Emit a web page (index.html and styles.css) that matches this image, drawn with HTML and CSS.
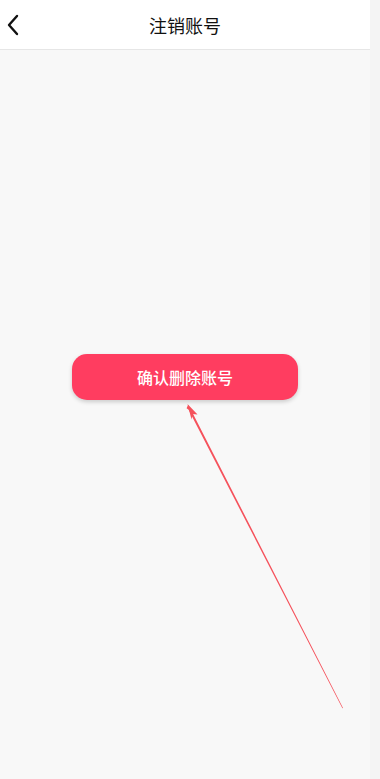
FILE: index.html
```html
<!DOCTYPE html>
<html lang="zh">
<head>
<meta charset="utf-8">
<link rel="stylesheet" href="styles.css">
</head>
<body>
<div class="screen">
  <div class="page">
    <header class="nav">
      <svg class="back" width="14" height="22" viewBox="0 0 14 22"><path d="M11 2 L3 11 L11 20" fill="none" stroke="#111" stroke-width="2.4" stroke-linecap="round" stroke-linejoin="round"/></svg>
      <h1 class="title">注销账号</h1>
    </header>
    <main class="content">
      <button class="confirm">确认删除账号</button>
    </main>
  </div>
  <div class="gutter"></div>
  <svg class="arrow" width="380" height="779" viewBox="0 0 380 779">
    <polygon points="188,405 190.8,409.5 343,708 342.4,708.3 188.6,409.8 186.6,408.2" fill="#f5525c"/>
    <polygon points="187.5,404 197.5,414.5 192.5,414 191.5,419.5" fill="#f5525c"/>
  </svg>
</div>
</body>
</html>
```
FILE: styles.css
```css
html, body {
  margin: 0;
  padding: 0;
}
body {
  width: 380px;
  height: 779px;
  overflow: hidden;
  font-family: "Noto Sans CJK SC", "Noto Sans", sans-serif;
  background: #f4f4f4;
}
.screen {
  position: relative;
  display: flex;
  width: 380px;
  height: 779px;
}
.page {
  width: 370px;
  display: flex;
  flex-direction: column;
  background: #f8f8f8;
}
.gutter {
  width: 10px;
  background: #f4f4f4;
}
.nav {
  position: relative;
  height: 49px;
  background: #fff;
  border-bottom: 1px solid #e6e6e6;
  display: flex;
  align-items: center;
  justify-content: center;
  flex-shrink: 0;
}
.back {
  position: absolute;
  left: 6px;
  top: 14px;
}
.title {
  margin: 0;
  font-size: 18px;
  font-weight: 400;
  color: #111;
}
.content {
  flex: 1;
  display: flex;
  justify-content: center;
  padding-top: 304px;
}
.confirm {
  width: 226px;
  height: 46px;
  border: none;
  border-radius: 15px;
  background: #ff3d60;
  color: #fff;
  font-family: inherit;
  font-size: 16px;
  font-weight: 500;
  box-shadow: 0 2px 4px rgba(0,0,0,0.18);
}
.arrow {
  position: absolute;
  left: 0;
  top: 0;
  pointer-events: none;
}
```
